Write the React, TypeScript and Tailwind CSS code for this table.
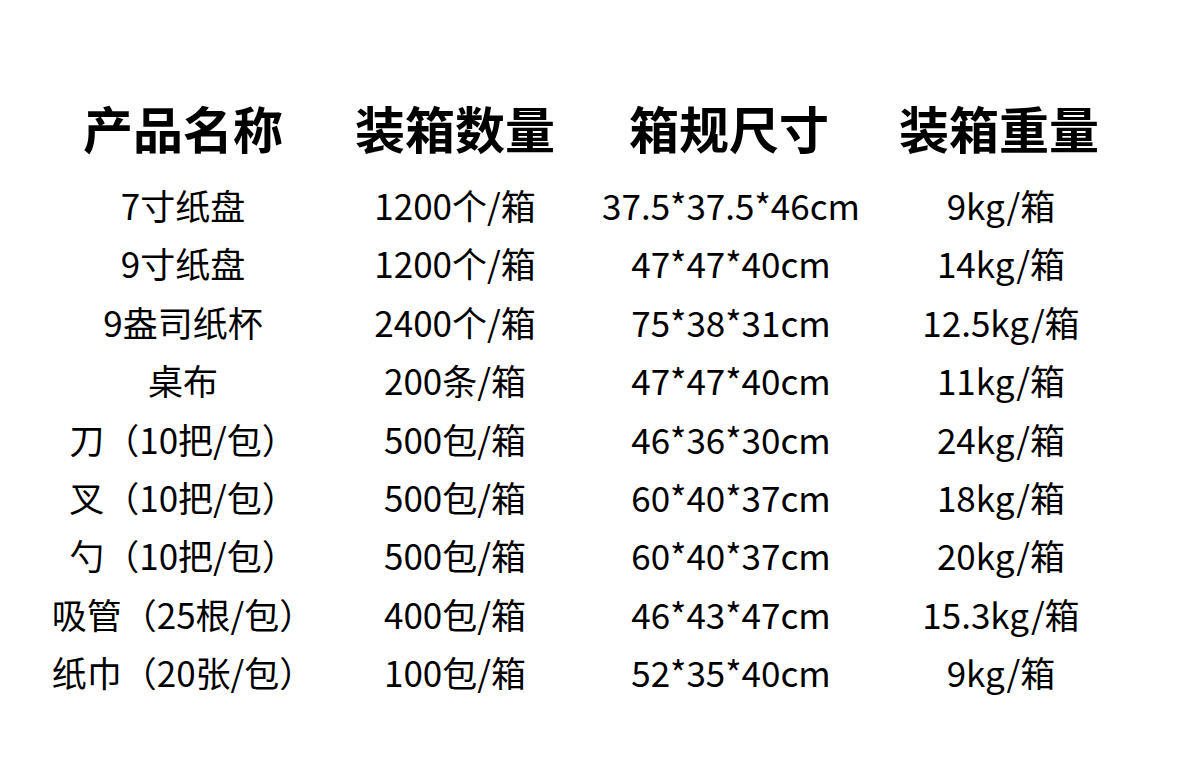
import React from "react";

const headers = ["产品名称", "装箱数量", "箱规尺寸", "装箱重量"];

const rows: string[][] = [
  ["7寸纸盘", "1200个/箱", "37.5*37.5*46cm", "9kg/箱"],
  ["9寸纸盘", "1200个/箱", "47*47*40cm", "14kg/箱"],
  ["9盎司纸杯", "2400个/箱", "75*38*31cm", "12.5kg/箱"],
  ["桌布", "200条/箱", "47*47*40cm", "11kg/箱"],
  ["刀（10把/包）", "500包/箱", "46*36*30cm", "24kg/箱"],
  ["叉（10把/包）", "500包/箱", "60*40*37cm", "18kg/箱"],
  ["勺（10把/包）", "500包/箱", "60*40*37cm", "20kg/箱"],
  ["吸管（25根/包）", "400包/箱", "46*43*47cm", "15.3kg/箱"],
  ["纸巾（20张/包）", "100包/箱", "52*35*40cm", "9kg/箱"],
];

export default function App() {
  return (
    <div
      className="w-[1200px] h-[761px] bg-white text-black overflow-hidden pt-[97px] pl-[47px]"
      style={{ fontFamily: '"Noto Sans CJK SC", "Noto Sans", sans-serif' }}
    >
      <div className="grid grid-cols-[272px_272px_276px_264px]">
        {headers.map((h) => (
          <div key={h} className="text-center text-[50px] font-bold leading-[60px] whitespace-nowrap">
            {h}
          </div>
        ))}
      </div>
      <div className="mt-[19px] grid grid-cols-[272px_272px_280px_260px]">
        {rows.map((r, i) =>
          r.map((c, j) => (
            <div
              key={`${i}-${j}`}
              className="text-center text-[35px] leading-[58.4px] whitespace-nowrap"
            >
              {c}
            </div>
          ))
        )}
      </div>
    </div>
  );
}
